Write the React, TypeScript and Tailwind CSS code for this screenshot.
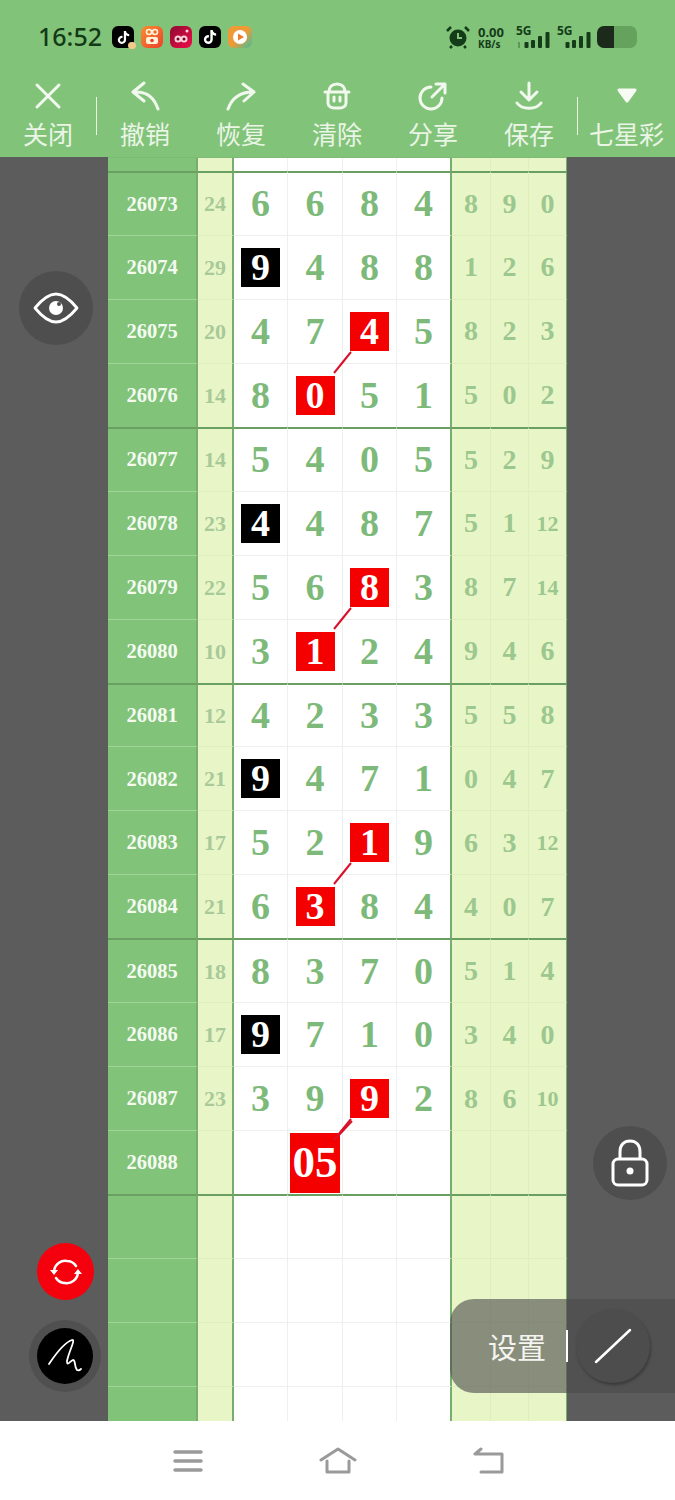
import { FaTiktok } from "react-icons/fa";

type Row = {
  id: string;
  sum: string;
  nums: string[];
  rest: string[];
  black?: number;
  red?: number;
  link?: boolean;
};

const rows: Row[] = [
  { id: "26073", sum: "24", nums: ["6", "6", "8", "4"], rest: ["8", "9", "0"] },
  { id: "26074", sum: "29", nums: ["9", "4", "8", "8"], rest: ["1", "2", "6"], black: 0 },
  { id: "26075", sum: "20", nums: ["4", "7", "4", "5"], rest: ["8", "2", "3"], red: 2, link: true },
  { id: "26076", sum: "14", nums: ["8", "0", "5", "1"], rest: ["5", "0", "2"], red: 1 },
  { id: "26077", sum: "14", nums: ["5", "4", "0", "5"], rest: ["5", "2", "9"] },
  { id: "26078", sum: "23", nums: ["4", "4", "8", "7"], rest: ["5", "1", "12"], black: 0 },
  { id: "26079", sum: "22", nums: ["5", "6", "8", "3"], rest: ["8", "7", "14"], red: 2, link: true },
  { id: "26080", sum: "10", nums: ["3", "1", "2", "4"], rest: ["9", "4", "6"], red: 1 },
  { id: "26081", sum: "12", nums: ["4", "2", "3", "3"], rest: ["5", "5", "8"] },
  { id: "26082", sum: "21", nums: ["9", "4", "7", "1"], rest: ["0", "4", "7"], black: 0 },
  { id: "26083", sum: "17", nums: ["5", "2", "1", "9"], rest: ["6", "3", "12"], red: 2, link: true },
  { id: "26084", sum: "21", nums: ["6", "3", "8", "4"], rest: ["4", "0", "7"], red: 1 },
  { id: "26085", sum: "18", nums: ["8", "3", "7", "0"], rest: ["5", "1", "4"] },
  { id: "26086", sum: "17", nums: ["9", "7", "1", "0"], rest: ["3", "4", "0"], black: 0 },
  { id: "26087", sum: "23", nums: ["3", "9", "9", "2"], rest: ["8", "6", "10"], red: 2, link: true },
];

const gridCols = "grid grid-cols-[90px_36px_54px_55px_54px_55px_39px_38px_38px]";

function Link() {
  return (
    <svg className="absolute left-[-12px] top-[50px] z-10" width="24" height="26" viewBox="0 0 24 26">
      <path d="M20 2 L3 23" stroke="#d8102a" strokeWidth="2" fill="none" />
    </svg>
  );
}

function NumCell({ row, i, thick }: { row: Row; i: number; thick: boolean }) {
  const top = thick ? "border-t-2 border-t-[#6a9f62]" : "border-t border-t-[#efefef]";
  const right = i === 3 ? "border-r-2 border-r-[#79ad70]" : "border-r border-r-[#efefef]";
  const v = row.nums[i];
  return (
    <div className={`relative flex items-center justify-center bg-white ${top} ${right}`}>
      {row.black === i && (
        <span className="flex h-[39px] w-[39px] items-center justify-center bg-black text-[38px] font-bold text-white">{v}</span>
      )}
      {row.red === i && (
        <span className="flex h-[39px] w-[39px] items-center justify-center bg-[#f50000] text-[38px] font-bold text-white">{v}</span>
      )}
      {row.black !== i && row.red !== i && <span className="text-[38px] font-bold text-[#7dba7a]">{v}</span>}
      {row.link && row.red === i && <Link />}
    </div>
  );
}

function TableRow({ row, thick }: { row?: Row; thick: boolean }) {
  const label = thick ? "border-t-2 border-t-[#6a9f62]" : "border-t border-t-[#9fd596]";
  const pale = thick ? "border-t-2 border-t-[#6a9f62]" : "border-t border-t-[#dcefbd]";
  const plain = thick ? "border-t-2 border-t-[#6a9f62]" : "border-t border-t-[#efefef]";
  return (
    <div className={`${gridCols} h-[63.94px]`}>
      <div className={`flex items-center justify-center bg-[#82c37a] border-r-2 border-r-[#79ad70] text-[20.5px] font-bold text-[#f4faf0] ${label}`}>
        {row?.id}
      </div>
      <div className={`flex items-center justify-center bg-[#e8f6c7] border-r-2 border-r-[#79ad70] text-[22px] font-bold text-[#a8c998] ${pale}`}>
        {row?.sum}
      </div>
      {row ? (
        [0, 1, 2, 3].map((i) => <NumCell key={i} row={row} i={i} thick={thick} />)
      ) : (
        <>
          <div className={`bg-white border-r border-r-[#efefef] ${plain}`} />
          <div className={`bg-white border-r border-r-[#efefef] ${plain}`} />
          <div className={`bg-white border-r border-r-[#efefef] ${plain}`} />
          <div className={`bg-white border-r-2 border-r-[#79ad70] ${plain}`} />
        </>
      )}
      {[0, 1, 2].map((i) => (
        <div
          key={i}
          className={`flex items-center justify-center bg-[#e8f6c7] text-[#9cc78f] font-bold ${
            row?.rest[i] && row.rest[i].length > 1 ? "text-[22px]" : "text-[28px]"
          } ${i === 2 ? "border-r border-r-[#79ad70]" : "border-r border-r-[#dcefbd]"} ${pale}`}
        >
          {row?.rest[i]}
        </div>
      ))}
    </div>
  );
}

// row 26088 only has the big red "05"
function LastRow() {
  return (
    <div className={`${gridCols} h-[63.94px]`}>
      <div className="flex items-center justify-center bg-[#82c37a] border-r-2 border-r-[#79ad70] border-t border-t-[#9fd596] text-[20.5px] font-bold text-[#f4faf0]">
        26088
      </div>
      <div className="bg-[#e8f6c7] border-r-2 border-r-[#79ad70] border-t border-t-[#dcefbd]" />
      <div className="bg-white border-r border-r-[#efefef] border-t border-t-[#efefef]" />
      <div className="relative flex items-center justify-center bg-white border-r border-r-[#efefef] border-t border-t-[#efefef]">
        <span className="absolute left-[2px] top-[2px] flex h-[60px] w-[50px] items-center justify-center bg-[#f50000] text-[45px] font-bold text-white">
          05
        </span>
        <svg className="absolute left-[48px] top-[-11px] z-10" width="18" height="18" viewBox="0 0 18 18">
          <path d="M16 1 L2 16" stroke="#d8102a" strokeWidth="2" fill="none" />
        </svg>
      </div>
      <div className="bg-white border-r border-r-[#efefef] border-t border-t-[#efefef]" />
      <div className="bg-white border-r-2 border-r-[#79ad70] border-t border-t-[#efefef]" />
      <div className="bg-[#e8f6c7] border-r border-r-[#dcefbd] border-t border-t-[#dcefbd]" />
      <div className="bg-[#e8f6c7] border-r border-r-[#dcefbd] border-t border-t-[#dcefbd]" />
      <div className="bg-[#e8f6c7] border-r border-r-[#79ad70] border-t border-t-[#dcefbd]" />
    </div>
  );
}

function ToolIcon({ name }: { name: string }) {
  const s = { stroke: "#f1f8ee", strokeWidth: 3, fill: "none", strokeLinecap: "round", strokeLinejoin: "round" } as const;
  if (name === "close")
    return (
      <svg width="30" height="30" viewBox="0 0 30 30">
        <path d="M4 4 L26 26 M26 4 L4 26" {...s} />
      </svg>
    );
  if (name === "undo")
    return (
      <svg width="30" height="30" viewBox="0 0 30 30">
        <path d="M14 2 L3 11 L14 20 M4 11 C16 10 24 16 28 28" {...s} />
      </svg>
    );
  if (name === "redo")
    return (
      <svg width="30" height="30" viewBox="0 0 30 30">
        <path d="M17 3 L28 11 L18 20 M27 11 C14 11 6 17 2 28" {...s} />
      </svg>
    );
  if (name === "clear")
    return (
      <svg width="30" height="30" viewBox="0 0 30 30">
        <path d="M3 11 H27 M6 11 V22 C6 25 9 27 12 27 H18 C21 27 24 25 24 22 V11 M7 11 C7 6 10 3 15 3 C20 3 23 6 23 11 M12 16 V20 M18 16 V20" {...s} />
      </svg>
    );
  if (name === "share")
    return (
      <svg width="30" height="30" viewBox="0 0 30 30">
        <path d="M24 17 A11 11 0 1 1 13 6 M14 16 L27 3 M18 3 H27 V12" {...s} />
      </svg>
    );
  if (name === "save")
    return (
      <svg width="30" height="30" viewBox="0 0 30 30">
        <path d="M15 2 V18 M7 11 L15 19 L23 11 M3 22 C8 29 22 29 27 22" {...s} />
      </svg>
    );
  return (
    <svg width="30" height="30" viewBox="0 0 30 30">
      <path d="M7 9 H23 L15 20 Z" fill="#f6fbf4" stroke="#f6fbf4" strokeWidth="3" strokeLinejoin="round" />
    </svg>
  );
}

function Tool({ icon, label, w }: { icon: string; label: string; w: string }) {
  return (
    <div className={`flex flex-col items-center ${w}`}>
      <ToolIcon name={icon} />
      <span className="mt-[6px] text-[25px] leading-[32px] text-[#eaf5e6]">{label}</span>
    </div>
  );
}

function Signal({ faint }: { faint?: boolean }) {
  return (
    <div className="relative h-[22px] w-[34px] shrink-0">
      <span className="absolute left-0 top-[-2px] text-[12px] font-bold leading-[13px] text-[#143c18]">5G</span>
      {faint && <span className="absolute bottom-0 left-[2px] h-[6px] w-[2px] bg-[#5c9a55]" />}
      <svg className="absolute bottom-0 right-0" width="26" height="16" viewBox="0 0 26 16">
        <rect x="0.5" y="10" width="4" height="6" rx="1" fill="#143c18" />
        <rect x="7" y="8" width="4" height="8" rx="1" fill="#143c18" />
        <rect x="14" y="4" width="4" height="12" rx="1" fill="#143c18" />
        <rect x="21.5" y="0" width="4" height="16" rx="1" fill="#143c18" />
      </svg>
    </div>
  );
}

function StatusBar() {
  return (
    <div className="flex h-[74px] items-center pl-[38px] font-['Noto_Sans',sans-serif]">
      <span className="w-[74px] text-[25px] font-medium text-[#123a15]">16:52</span>
      <div className="flex items-center gap-[7px]">
        <div className="relative flex h-[22px] w-[22px] items-center justify-center rounded-[6px] bg-black">
          <FaTiktok className="text-white" size={13} />
          <span className="absolute bottom-[-1px] right-[-2px] h-[7px] w-[8px] rounded-full bg-[#f1c98a]" />
        </div>
        <div className="flex h-[22px] w-[22px] items-center justify-center rounded-[6px] bg-[linear-gradient(135deg,#f59030,#ee3f2c)]">
          <svg width="16" height="18" viewBox="0 0 16 18">
            <circle cx="5" cy="4" r="2.5" fill="none" stroke="#fff3d8" strokeWidth="1.6" />
            <circle cx="11" cy="4" r="2.5" fill="none" stroke="#fff3d8" strokeWidth="1.6" />
            <rect x="2" y="9" width="12" height="7" rx="2" fill="#fff3d8" />
            <circle cx="8" cy="12.5" r="1.8" fill="#ea3a2a" />
          </svg>
        </div>
        <div className="flex h-[22px] w-[22px] items-center justify-center rounded-[6px] bg-[linear-gradient(135deg,#8e0a30,#ef0c4a)]">
          <svg width="18" height="16" viewBox="0 0 18 16">
            <circle cx="6" cy="10" r="3.5" fill="#ffd2dc" />
            <circle cx="12" cy="10" r="3.5" fill="#ffd2dc" />
            <circle cx="6" cy="10" r="1.5" fill="#6b0620" />
            <circle cx="12" cy="10" r="1.5" fill="#6b0620" />
            <circle cx="15" cy="2" r="1.5" fill="#ffd2dc" />
          </svg>
        </div>
        <div className="flex h-[22px] w-[22px] items-center justify-center rounded-[6px] bg-black">
          <FaTiktok className="text-white" size={14} />
        </div>
        <div className="flex h-[22px] w-[24px] items-center justify-center rounded-[6px] bg-[linear-gradient(135deg,#f09a35_50%,#3fc0a0)]">
          <svg width="16" height="16" viewBox="0 0 16 16">
            <circle cx="8" cy="8" r="7" fill="#fff" />
            <path d="M6 4.5 L12 8 L6 11.5 Z" fill="#ee7d2a" />
          </svg>
        </div>
      </div>
      <div className="ml-[193px] flex items-center">
        <svg width="26" height="24" viewBox="0 0 26 24">
          <circle cx="13" cy="13" r="8.5" fill="#143c18" />
          <path d="M13 8 V13 H17" stroke="#83c47b" strokeWidth="2" fill="none" />
          <path d="M2 6 L6 2 M24 6 L20 2 M7 21 L5 23 M19 21 L21 23" stroke="#143c18" strokeWidth="2.5" />
        </svg>
        <div className="ml-[7px] flex w-[38px] flex-col text-[#143c18]">
          <span className="text-[13px] font-bold leading-[14px]">0.00</span>
          <span className="text-[10px] font-bold leading-[11px]">KB/s</span>
        </div>
        <Signal faint />
        <div className="ml-[7px]">
          <Signal />
        </div>
        <div className="ml-[6px] flex h-[22px] w-[40px] overflow-hidden rounded-[7px] bg-[#64a25e]">
          <div className="h-full w-[17px] bg-[#1c2a1c]" />
        </div>
      </div>
    </div>
  );
}

function Toolbar() {
  return (
    <div className="flex h-[83px] items-start pt-[7px]">
      <Tool icon="close" label="关闭" w="w-[96px]" />
      <div className="mt-[16px] h-[38px] w-px bg-[#eaf5e6]" />
      <Tool icon="undo" label="撤销" w="w-[96px]" />
      <Tool icon="redo" label="恢复" w="w-[96px]" />
      <Tool icon="clear" label="清除" w="w-[96px]" />
      <Tool icon="share" label="分享" w="w-[96px]" />
      <Tool icon="save" label="保存" w="w-[96px]" />
      <div className="mt-[16px] h-[38px] w-px bg-[#eaf5e6]" />
      <Tool icon="lotto" label="七星彩" w="w-[97px]" />
    </div>
  );
}

function NavBar() {
  return (
    <div className="flex h-[79px] items-center bg-white pl-[172px]">
      <svg width="32" height="24" viewBox="0 0 32 24">
        <path d="M3 3 H29 M3 12 H29 M3 21 H29" stroke="#9a9a9a" strokeWidth="3.5" strokeLinecap="round" />
      </svg>
      <svg className="ml-[115px]" width="38" height="28" viewBox="0 0 38 28">
        <path d="M2 13 L19 2 L36 13 M8 14 V25 H30 V14" stroke="#9a9a9a" strokeWidth="3" fill="none" strokeLinejoin="round" strokeLinecap="round" />
      </svg>
      <svg className="ml-[115px]" width="34" height="28" viewBox="0 0 34 28">
        <path d="M3 7 H30 V25 H9 M3 7 L9 2" stroke="#9a9a9a" strokeWidth="3" fill="none" strokeLinejoin="round" strokeLinecap="round" />
      </svg>
    </div>
  );
}

export default function App() {
  return (
    <div className="relative flex h-[1500px] w-[675px] flex-col overflow-hidden bg-[#5c5c5c] font-['Noto_Sans_CJK_SC',sans-serif]">
      <div className="h-[157px] bg-[#82c37a]">
        <StatusBar />
        <Toolbar />
      </div>

      <div className="flex h-[1264px]">
        <div className="w-[108px]" />
        <div className="w-[459px] overflow-hidden border-t border-t-[#7dbb75] font-['Liberation_Serif',serif]">
          <div className={`${gridCols} h-[13px]`}>
            <div className="bg-[#82c37a] border-r-2 border-r-[#79ad70]" />
            <div className="bg-[#e8f6c7] border-r-2 border-r-[#79ad70]" />
            <div className="bg-white border-r border-r-[#efefef]" />
            <div className="bg-white border-r border-r-[#efefef]" />
            <div className="bg-white border-r border-r-[#efefef]" />
            <div className="bg-white border-r-2 border-r-[#79ad70]" />
            <div className="bg-[#e8f6c7] border-r border-r-[#dcefbd]" />
            <div className="bg-[#e8f6c7] border-r border-r-[#dcefbd]" />
            <div className="bg-[#e8f6c7] border-r border-r-[#79ad70]" />
          </div>
          {rows.map((r, i) => (
            <TableRow key={r.id} row={r} thick={i % 4 === 0} />
          ))}
          <LastRow />
          <TableRow thick />
          <TableRow thick={false} />
          <TableRow thick={false} />
          <TableRow thick={false} />
        </div>
      </div>

      <NavBar />

      {/* floating buttons over the sheet */}
      <div className="absolute left-[19px] top-[271px] flex h-[74px] w-[74px] items-center justify-center rounded-full bg-[#4e4e4e]">
        <svg width="46" height="32" viewBox="0 0 46 32">
          <path d="M2 16 C11 5 17 2 23 2 C29 2 35 5 44 16 C35 27 29 30 23 30 C17 30 11 27 2 16 Z" fill="none" stroke="#fff" strokeWidth="2.8" strokeLinejoin="round" />
          <circle cx="23" cy="16" r="7" fill="#fff" />
          <circle cx="26" cy="12" r="2" fill="#4e4e4e" />
        </svg>
      </div>
      <div className="absolute left-[593px] top-[1126px] flex h-[74px] w-[74px] items-center justify-center rounded-full bg-[#4e4e4e]">
        <svg width="38" height="48" viewBox="0 0 38 48">
          <path d="M9 20 V13 C9 6 13 2 19 2 C25 2 29 6 29 13 V20" fill="none" stroke="#fff" strokeWidth="3" />
          <rect x="2" y="20" width="34" height="26" rx="5" fill="none" stroke="#fff" strokeWidth="3" />
          <circle cx="19" cy="32" r="3.5" fill="#fff" />
        </svg>
      </div>
      <div className="absolute left-[37px] top-[1243px] flex h-[57px] w-[57px] items-center justify-center rounded-full bg-[#f5000d]">
        <svg width="32" height="28" viewBox="0 0 32 28">
          <path d="M4 13 C5 6 11 2 17 3 C21 3 24 5 26 8 M28 15 C27 22 21 26 15 25 C11 25 8 23 6 20" fill="none" stroke="#fff" strokeWidth="2.5" strokeLinecap="round" />
          <path d="M0 12 L8 12 L4 17 Z M24 16 L32 16 L28 11 Z" fill="#fff" />
        </svg>
      </div>
      <div className="absolute left-[29px] top-[1320px] flex h-[72px] w-[72px] items-center justify-center rounded-full bg-[#505050]">
        <div className="flex h-[56px] w-[56px] items-center justify-center rounded-full bg-black">
          <svg width="38" height="38" viewBox="0 0 38 38">
            <path d="M3 27 C11 15 20 5 26 3 C30 2 23 14 21 24 C21 30 24 24 27 23 C30 23 28 30 31 33 C33 34 34 33 35 32" fill="none" stroke="#fff" strokeWidth="1.8" strokeLinecap="round" />
          </svg>
        </div>
      </div>
      <div className="absolute left-[450px] top-[1299px] flex h-[94px] w-[225px] items-center rounded-l-[24px] bg-[#494949]/60 pl-[38px]">
        <span className="text-[29px] leading-none text-[#f4f4f0]">设置</span>
        <div className="ml-[20px] h-[32px] w-[2px] bg-white" />
        <div className="ml-[8px] flex h-[74px] w-[74px] items-center justify-center rounded-full bg-[#4d4d4d] shadow-[1px_2px_3px_rgba(0,0,0,0.3)]">
          <svg width="38" height="36" viewBox="0 0 38 36">
            <path d="M2 34 L36 2" stroke="#fff" strokeWidth="2.5" strokeLinecap="round" />
          </svg>
        </div>
      </div>
    </div>
  );
}
